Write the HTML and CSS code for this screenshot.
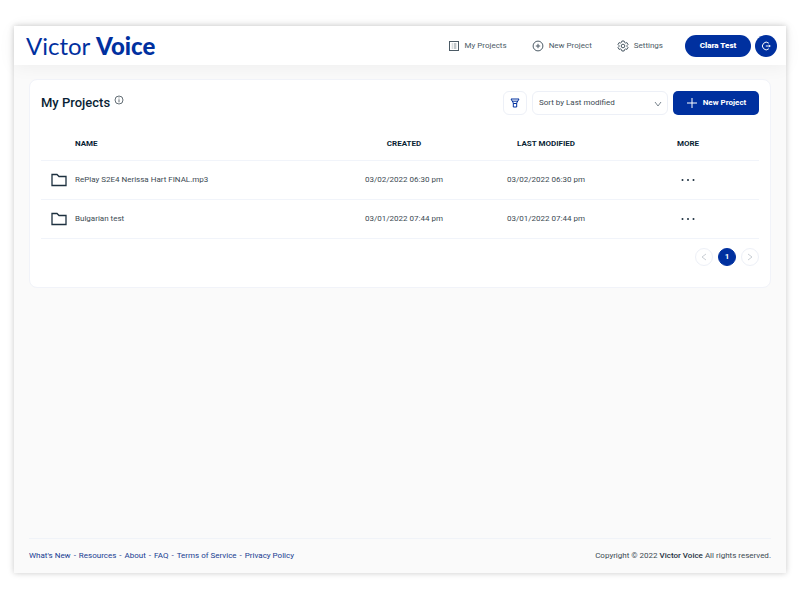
FILE: index.html
```html
<!DOCTYPE html>
<html lang="en">
<head>
<meta charset="utf-8">
<title>My Projects - Victor Voice</title>
<meta name="viewport" content="width=device-width, initial-scale=1">
<link rel="stylesheet" href="styles.css">
</head>
<body>
<div class="app">
  <header class="topbar">
    <a class="logo" href="#">Victor <b>Voice</b></a>
    <nav class="nav">
      <a href="#"><svg class="icon" viewBox="0 0 12 12"><rect x="1.5" y="1.5" width="9" height="9"/><path d="M3.8 4h.8M3.8 6h.8M3.8 8h.8M5.8 4h2.6M5.8 6h2.6M5.8 8h2.6" stroke-width=".7"/></svg>My Projects</a>
      <a href="#"><svg class="icon" viewBox="0 0 12 12"><circle cx="6" cy="6" r="4.9"/><path d="M6 3.8v4.4M3.8 6h4.4"/></svg>New Project</a>
      <a href="#"><svg class="icon" viewBox="0 0 12 12"><path d="M4.9 1h2.2l.4 1.4 1 .6 1.4-.4L11 4.500l-1 1v1l1 1-1.100 1.900-1.400-.4-1 .6-.4 1.400H4.900l-.4-1.400-1-.6-1.400.4L1 7.500l1-1v-1l-1-1 1.100-1.900 1.400.4 1-.6z"/><circle cx="6" cy="6" r="1.800"/></svg>Settings</a>
    </nav>
    <div class="account">
      <button class="user" type="button">Clara Test</button>
      <button class="logout" type="button" aria-label="Log out"><svg class="icon" viewBox="0 0 12 12"><path d="M8.800 3.200A3.800 3.800 0 1 0 8.800 8.800M5.800 6h4.400M9 4.800L10.200 6 9 7.200"/></svg></button>
    </div>
  </header>
  <main class="content">
    <section class="card">
      <div class="card-head">
        <h1>My Projects</h1>
        <svg class="info" viewBox="0 0 10 10"><circle cx="5" cy="5" r="4"/><path d="M5 4.300v3M5 2.500v.9"/></svg>
        <div class="tools">
          <button class="filter" type="button" aria-label="Filter"><svg class="icon" viewBox="0 0 12 12"><path d="M2 2h8L7.700 6v4H4.300V6zM3.200 4.200h5.600M4.300 6.500h3.400"/></svg></button>
          <div class="sort">
            <select aria-label="Sort projects"><option>Sort by Last modified</option><option>Sort by Created</option></select>
            <svg class="chevron" viewBox="0 0 8 8"><path d="M1 2l3 4 3-4"/></svg>
          </div>
          <button class="new" type="button"><svg class="icon" viewBox="0 0 12 12"><path d="M6 1v10M1 6h10"/></svg>New Project</button>
        </div>
      </div>
      <table>
        <colgroup><col class="c-icon"><col class="c-name"><col class="c-date"><col class="c-date"><col class="c-more"></colgroup>
        <thead><tr><th></th><th class="name">NAME</th><th>CREATED</th><th>LAST MODIFIED</th><th>MORE</th></tr></thead>
        <tbody>
          <tr>
            <td><svg class="folder" viewBox="0 0 16 14"><path d="M1 1.500h5l2 2h7v9H1z"/></svg></td>
            <td class="name">RePlay S2E4 Nerissa Hart FINAL.mp3</td><td>03/02/2022 06:30 pm</td><td>03/02/2022 06:30 pm</td>
            <td><button class="more" type="button" aria-label="More"><svg viewBox="0 0 14 4"><circle cx="1.500" cy="2" r="1"/><circle cx="7" cy="2" r="1"/><circle cx="12.500" cy="2" r="1"/></svg></button></td>
          </tr>
          <tr>
            <td><svg class="folder" viewBox="0 0 16 14"><path d="M1 1.500h5l2 2h7v9H1z"/></svg></td>
            <td class="name">Bulgarian test</td><td>03/01/2022 07:44 pm</td><td>03/01/2022 07:44 pm</td>
            <td><button class="more" type="button" aria-label="More"><svg viewBox="0 0 14 4"><circle cx="1.500" cy="2" r="1"/><circle cx="7" cy="2" r="1"/><circle cx="12.500" cy="2" r="1"/></svg></button></td>
          </tr>
        </tbody>
      </table>
      <nav class="pager" aria-label="Pages">
        <button type="button" aria-label="Previous page"><svg viewBox="0 0 8 8"><path d="M6 1L2 4l4 3"/></svg></button>
        <button class="current" type="button">1</button>
        <button type="button" aria-label="Next page"><svg viewBox="0 0 8 8"><path d="M2 1l4 3-4 3"/></svg></button>
      </nav>
    </section>
  </main>
  <footer class="footer">
    <div class="links"><a href="#">What's New</a><span>-</span><a href="#">Resources</a><span>-</span><a href="#">About</a><span>-</span><a href="#">FAQ</a><span>-</span><a href="#">Terms of Service</a><span>-</span><a href="#">Privacy Policy</a></div>
    <div>Copyright © 2022 <strong>Victor Voice</strong> All rights reserved.</div>
  </footer>
</div>
</body>
</html>
```
FILE: styles.css
```css
* { box-sizing: border-box; }
body {
  margin: 0;
  min-height: 100vh;
  padding: 26px 14px 27px;
  display: flex;
  background: #fff;
  color: #3c4a53;
  font: 8px/12px Roboto, sans-serif;
}
a { color: inherit; text-decoration: none; }
button, select { font: inherit; color: inherit; margin: 0; padding: 0; border: 0; background: none; }
svg { display: block; fill: none; stroke: currentColor; stroke-width: 1; flex: none; }
.icon { width: 12px; height: 12px; }
.app {
  flex: 1;
  min-width: 0;
  display: flex;
  flex-direction: column;
  background: #fafafa;
  box-shadow: 0 0 6px rgba(0, 0, 0, .22);
}
.topbar {
  height: 39px;
  padding: 0 9px 0 12px;
  display: flex;
  align-items: center;
  background: #fff;
  box-shadow: 0 2px 18px rgba(0, 0, 0, .05);
}
.logo { font: 400 24px/32px Lato, sans-serif; color: #00309f; }
.logo b { font-weight: 900; }
.nav { margin-left: auto; display: flex; gap: 25px; color: #4c5b66; }
.nav a { display: flex; align-items: center; gap: 5px; }
.account { display: flex; gap: 4px; margin-left: 22px; color: #fff; }
.user { height: 22px; width: 66px; border-radius: 11px; background: #00309f; font-weight: 900; }
.logout { width: 22px; height: 22px; border-radius: 50%; background: #00309f; display: grid; place-items: center; }
.content { flex: 1; padding: 14px 15px; }
.card {
  padding: 11px 11px 21px;
  border: 1px solid #f1f3f9;
  border-radius: 8px;
  background: #fff;
}
.card-head { display: flex; align-items: center; }
h1 { margin: 0; font: 500 13px/24px Roboto, sans-serif; color: #0a1f35; }
.info { width: 10px; height: 10px; margin: 0 0 6px 4px; stroke-width: .8; }
.tools { margin-left: auto; display: flex; gap: 5px; }
.filter { width: 24px; height: 24px; border: 1px solid #edf0f7; border-radius: 6px; display: grid; place-items: center; color: #00309f; }
.sort { position: relative; }
.sort select { appearance: none; width: 136px; height: 24px; padding: 0 20px 0 6px; border: 1px solid #edf0f7; border-radius: 6px; background: #fff; }
.chevron { position: absolute; right: 6px; top: 9px; width: 8px; height: 8px; pointer-events: none; color: #7b868f; }
.new { width: 86px; height: 24px; border-radius: 5px; background: #00309f; color: #fff; font-weight: 700; display: flex; align-items: center; justify-content: center; gap: 5px; }
table { width: 100%; margin-top: 14px; border-collapse: collapse; table-layout: fixed; }
.c-icon { width: 34px; }
.c-date, .c-more { width: 142px; }
th, td { padding: 0; height: 39px; border-bottom: 1px solid #f1f4fa; text-align: center; }
th { height: 31px; font-weight: 700; color: #0a1f35; }
th.name, td.name { text-align: left; }
.folder { width: 16px; height: 14px; margin-left: 10px; color: #1d303f; stroke-width: 1.3; }
.more svg { width: 14px; height: 4px; fill: #1d303f; stroke: none; }
.pager { display: flex; justify-content: flex-end; gap: 5px; margin-top: 9px; }
.pager button { width: 18px; height: 18px; border: 1px solid #edf0f7; border-radius: 50%; display: grid; place-items: center; color: #c9ced4; }
.pager svg { width: 8px; height: 8px; }
.pager .current { background: #00309f; border-color: #00309f; color: #fff; font-weight: 700; }
.footer { margin: 0 15px; padding: 11px 0; border-top: 1px solid #f0f3f8; display: flex; justify-content: space-between; }
.links { display: flex; gap: 3px; color: #173a91; }
.footer strong { font-weight: 500; color: #1d303f; }
```
